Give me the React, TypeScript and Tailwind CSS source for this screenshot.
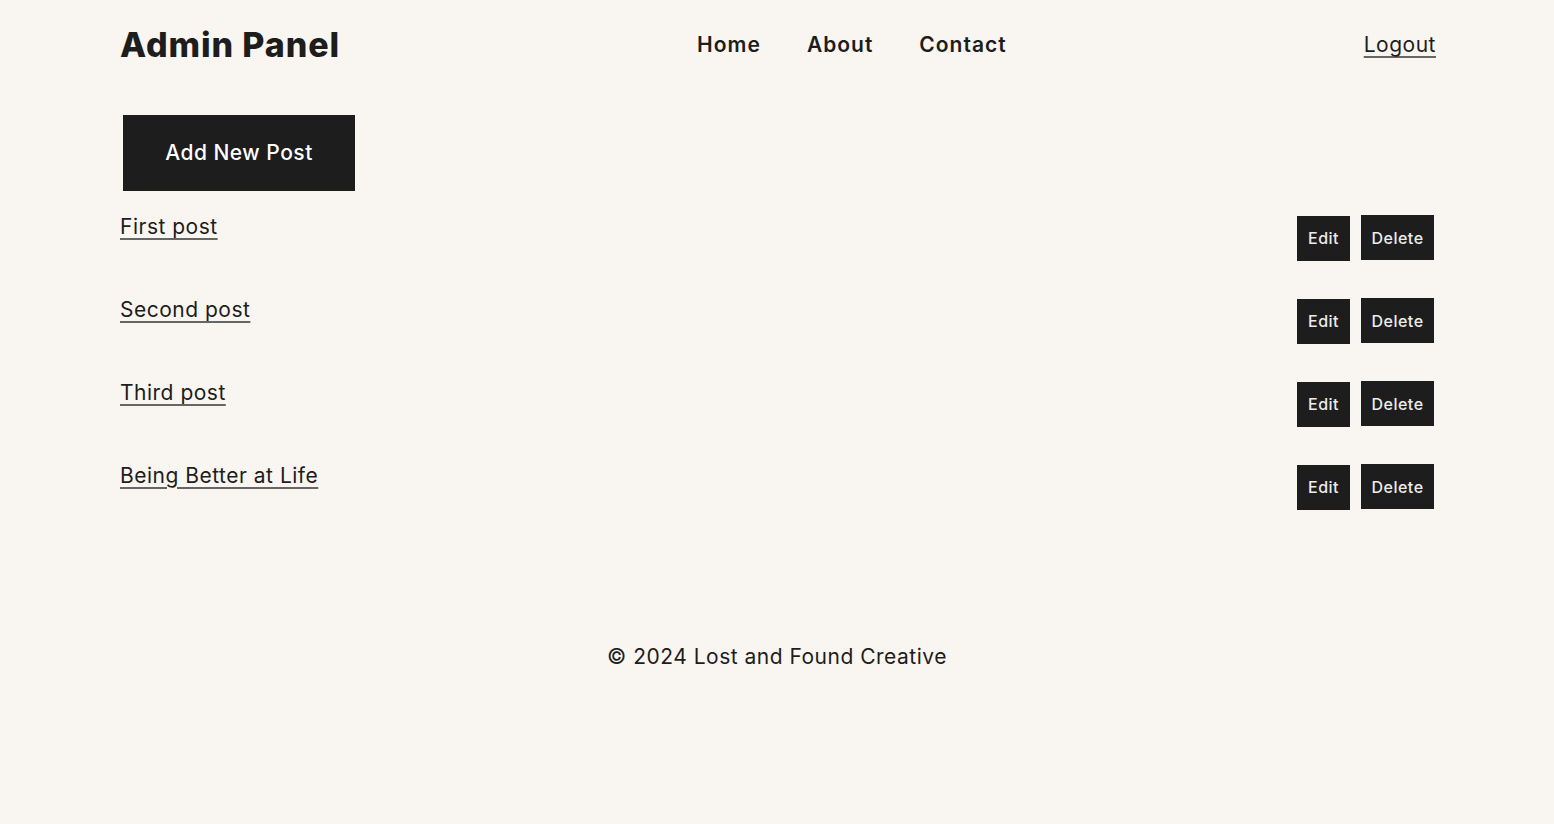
import React from "react";

const posts = ["First post", "Second post", "Third post", "Being Better at Life"];

export default function App() {
  return (
    <div className="min-h-screen bg-[#f9f5f0] text-[#1d1d1d]" style={{ fontFamily: "Inter, 'Noto Sans', sans-serif" }}>
      <div className="px-[118px]">
        <header className="flex h-[88px] items-center justify-between">
          <div className="ml-[2px] text-[34px] font-extrabold tracking-[0.9px]">Admin Panel</div>
          <nav className="flex gap-[46px] pt-[2px] text-[21px] font-semibold tracking-[1px]">
            <a>Home</a>
            <a>About</a>
            <a>Contact</a>
          </nav>
          <a className="pt-[2px] text-[21px] tracking-[0.5px] underline decoration-[#666] underline-offset-4">Logout</a>
        </header>
        <main className="pt-[27px]">
          <button className="ml-[5px] h-[76px] w-[232px] bg-[#1d1d1d] text-[21px] font-medium tracking-[0.5px] text-white">Add New Post</button>
          <ul className="mt-[21px]">
            {posts.map((p) => (
              <li key={p} className="flex h-[83px] items-start justify-between">
                <a className="ml-[2px] text-[21px] leading-[30px] tracking-[0.5px] underline decoration-[#666] underline-offset-4">{p}</a>
                <div className="mr-[2px] flex items-start gap-[11px]">
                  <button className="mt-[4px] h-[45px] w-[53px] bg-[#1d1d1d] text-[16px] font-medium leading-[43px] tracking-[0.5px] text-[#ececec]">Edit</button>
                  <button className="mt-[3px] h-[45px] w-[73px] bg-[#1d1d1d] text-[16px] font-medium leading-[46px] tracking-[0.5px] text-[#ececec]">Delete</button>
                </div>
              </li>
            ))}
          </ul>
        </main>
      </div>
      <footer className="mt-[98px] text-center text-[21px] leading-[30px] tracking-[0.5px]">© 2024 Lost and Found Creative</footer>
    </div>
  );
}
